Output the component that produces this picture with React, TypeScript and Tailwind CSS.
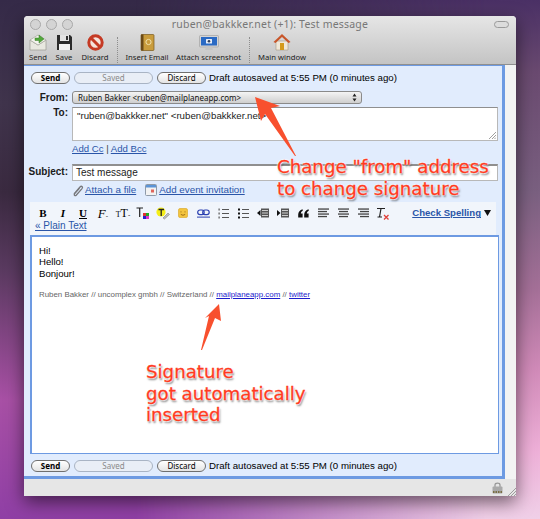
import React from "react";

const sans = "font-['Liberation_Sans',Arial,sans-serif]";
const lucida = "font-['Noto_Sans',sans-serif]";
const linkCls = "text-[#2a55a8] underline";

const Pill: React.FC<{ label: string; width: string; disabled?: boolean; bold?: boolean }> = ({ label, width, disabled, bold }) => (
  <div
    className={`${width} h-[12px] rounded-full border flex items-center justify-center text-[8px] leading-none ${lucida} ${
      disabled
        ? "border-[#a9b4c4] bg-[#e9eef6] text-[#8a8a8a]"
        : "border-[#6f6f6f] bg-gradient-to-b from-white to-[#e4e4e4] text-black"
    } ${bold ? "font-bold" : ""}`}
  >
    {label}
  </div>
);

const ActionRow = () => (
  <div className="flex items-center h-[13px] pl-[7px]">
    <Pill label="Send" width="w-[39px]" bold />
    <div className="w-[4px]" />
    <Pill label="Saved" width="w-[79px]" disabled />
    <div className="w-[4px]" />
    <Pill label="Discard" width="w-[49px]" />
    <span className={`ml-[3px] text-[9.7px] leading-none text-black whitespace-nowrap ${sans}`}>
      Draft autosaved at 5:55 PM (0 minutes ago)
    </span>
  </div>
);

const ToolItem: React.FC<{ label: string; width: string; children: React.ReactNode }> = ({ label, width, children }) => (
  <div className={`${width} flex flex-col items-center shrink-0`}>
    <div className="h-[17px] flex items-end">{children}</div>
    <span className={`mt-[2px] text-[7.7px] leading-[9px] text-[#1c1c1c] whitespace-nowrap ${lucida}`}>{label}</span>
  </div>
);

const SendIcon = () => (
  <svg width="18" height="17" viewBox="0 0 18 17">
    <path d="M1 6 L9 11 L17 6 V16 H1 Z" fill="#e8e8e0" stroke="#9a9a90" strokeWidth=".7" />
    <path d="M1 6 L9 1 L17 6 L9 11 Z" fill="#f4f4ee" stroke="#a5a59c" strokeWidth=".7" />
    <path d="M6 4 H10 V1 L15 5 L10 9 V6.5 H6 Z" fill="#52a83c" stroke="#3c7f2b" strokeWidth=".5" />
  </svg>
);
const SaveIcon = () => (
  <svg width="17" height="17" viewBox="0 0 17 17">
    <path d="M1 1 H14 L16 3 V16 H1 Z" fill="#2b2b2b" />
    <rect x="4" y="1" width="9" height="6" fill="#e3e3e3" />
    <rect x="10" y="2" width="2" height="4" fill="#333" />
    <rect x="3" y="10" width="11" height="6" fill="#f2f2f2" />
  </svg>
);
const DiscardIcon = () => (
  <svg width="17" height="17" viewBox="0 0 17 17">
    <circle cx="8.5" cy="8.5" r="6.7" fill="#f5e3dc" stroke="#c53a24" strokeWidth="3" />
    <path d="M4 4 L13 13" stroke="#c53a24" strokeWidth="3" />
  </svg>
);
const BookIcon = () => (
  <svg width="15" height="17" viewBox="0 0 15 17">
    <rect x="1" y="0.5" width="13" height="16" rx="1" fill="#c99c3c" stroke="#7a5a1c" strokeWidth=".7" />
    <rect x="1" y="0.5" width="2.5" height="16" fill="#6b4a18" />
    <circle cx="8.5" cy="8" r="2.6" fill="none" stroke="#f3e1aa" strokeWidth="1" />
  </svg>
);
const ScreenIcon = () => (
  <svg width="20" height="16" viewBox="0 0 20 16">
    <rect x="0.5" y="0.5" width="19" height="11.5" rx="1" fill="#d5d5d5" stroke="#9a9a9a" strokeWidth=".6" />
    <rect x="2" y="2" width="16" height="8.5" fill="#2a6ac4" />
    <rect x="7" y="4" width="6" height="4.5" rx=".5" fill="#e8eef8" />
    <circle cx="10" cy="6.2" r="1.3" fill="#30405c" />
    <path d="M7 12 H13 L14 15 H6 Z" fill="#c4c4c4" />
  </svg>
);
const HomeIcon = () => (
  <svg width="18" height="18" viewBox="0 0 18 18">
    <path d="M3 8 H15 V17 H3 Z" fill="#f0e8d8" stroke="#9a8a70" strokeWidth=".5" />
    <path d="M0.5 9 L9 1 L17.5 9 L15.5 10 L9 4 L2.5 10 Z" fill="#c8562a" />
    <rect x="7" y="10" width="4" height="7" fill="#d49a1c" />
  </svg>
);
const Separator = () => (
  <div className="w-0 h-[28px] border-l border-dotted border-[#8d8d8d] shrink-0" />
);

const FormRow: React.FC<{ label: string; className?: string; labelClass?: string; children: React.ReactNode }> = ({ label, className, labelClass, children }) => (
  <div className={`flex items-start ${className ?? ""}`}>
    <span className={`w-[44px] mr-[4px] text-right text-[10px] leading-none font-bold text-[#1a1a1a] shrink-0 ${sans} ${labelClass ?? ""}`}>{label}</span>
    {children}
  </div>
);

const ClipIcon = () => (
  <svg width="12" height="13" viewBox="0 0 12 13">
    <path d="M2 10 L8 3 C9.5 1.4 11.3 3 10 4.6 L4.2 11.2 C3.2 12.2 1.6 11.2 2.5 9.8 L7.6 4" fill="none" stroke="#77787c" strokeWidth="1.3" />
  </svg>
);
const CalIcon = () => (
  <svg width="12" height="12" viewBox="0 0 12 12">
    <rect x=".5" y=".5" width="11" height="11" rx="1" fill="#f2f2f2" stroke="#8f9aa8" />
    <rect x="1" y="1" width="10" height="2.5" fill="#5c94d6" />
    <rect x="6" y="5.5" width="3" height="3" fill="#e0655c" />
  </svg>
);

const serifGlyph = "font-['Liberation_Serif',serif] text-black leading-none";
const Cell: React.FC<{ children: React.ReactNode }> = ({ children }) => (
  <div className="w-[20px] h-[14px] flex items-center justify-center shrink-0">{children}</div>
);
const Lines: React.FC<{ kind?: "left" | "center" | "right" }> = ({ kind = "left" }) => (
  <svg width="11" height="10" viewBox="0 0 11 10">
    {[1, 3.5, 6, 8.5].map((y, i) => (
      <rect
        key={y}
        x={kind === "left" ? 0 : kind === "right" ? (i % 2 ? 2 : 0) : i % 2 ? 1 : 0}
        y={y - 0.6}
        width={i % 2 ? 9 : 11}
        height="1.3"
        fill="#444"
      />
    ))}
  </svg>
);
const ListIcon: React.FC<{ dots?: boolean }> = ({ dots }) => (
  <svg width="11" height="11" viewBox="0 0 11 11">
    {[1.5, 5.5, 9.5].map((y) => (
      <g key={y}>
        {dots ? <rect x="0" y={y - 1} width="2" height="2" fill="#111" /> : <rect x="0.5" y={y - 1} width="1.2" height="2" fill="#555" />}
        <rect x="4" y={y - 0.5} width="7" height="1" fill="#555" />
      </g>
    ))}
  </svg>
);
const IndentIcon: React.FC<{ out?: boolean }> = ({ out }) => (
  <svg width="12" height="10" viewBox="0 0 12 10">
    <rect x="4" y="0.5" width="8" height="9" fill="#555" />
    <path d="M5 2.5 H11 M5 5 H11 M5 7.5 H11" stroke="#eee" strokeWidth=".8" />
    <path d={out ? "M3.5 2 L0 5 L3.5 8 Z" : "M0 2 L3.5 5 L0 8 Z"} fill="#111" />
  </svg>
);

const EditorToolbar = () => (
  <div className="mx-[6px] h-[33px] bg-[#f1f5fb] pl-[3px] pr-[5px] pt-[4px] flex flex-col">
    <div className="flex items-center h-[14px]">
      <Cell><span className={`font-bold text-[11px] ${serifGlyph}`}>B</span></Cell>
      <Cell><span className={`italic font-bold text-[11px] ${serifGlyph}`}>I</span></Cell>
      <Cell><span className={`underline font-bold text-[11px] ${serifGlyph}`}>U</span></Cell>
      <Cell><span className={`italic text-[13px] ${serifGlyph}`}>F<span className="text-[7px] not-italic">-</span></span></Cell>
      <Cell><span className={`text-[12px] ${serifGlyph}`}><span className="text-[8px]">T</span>T<span className="text-[7px]">-</span></span></Cell>
      <Cell>
        <svg width="14" height="12" viewBox="0 0 14 12">
          <path d="M0.5 1 H7 M3.7 1 V10" stroke="#222" strokeWidth="1.2" fill="none" />
          <rect x="7" y="6" width="3" height="3" fill="#d33" /><rect x="10" y="6" width="3" height="3" fill="#2a2" />
          <rect x="7" y="9" width="3" height="3" fill="#22c" /><rect x="10" y="9" width="3" height="3" fill="#d3c" />
        </svg>
      </Cell>
      <Cell>
        <svg width="14" height="13" viewBox="0 0 14 13">
          <circle cx="5" cy="5" r="4.6" fill="#f5ee18" />
          <path d="M2.5 2.5 H8 M5.2 2.5 V9" stroke="#222" strokeWidth="1.3" fill="none" />
          <path d="M7 11 L12 6 L13.5 7.5 L8.5 12 Z" fill="#bdbdbd" stroke="#777" strokeWidth=".5" />
        </svg>
      </Cell>
      <Cell>
        <svg width="10" height="10" viewBox="0 0 10 10">
          <rect x=".5" y=".5" width="9" height="9" rx="1.5" fill="#f4c53e" stroke="#d9a420" strokeWidth=".6" />
          <path d="M3 3.4 V4.4 M7 3.4 V4.4 M2.8 6.4 Q5 8.2 7.2 6.4" stroke="#8a5a10" strokeWidth=".8" fill="none" />
        </svg>
      </Cell>
      <Cell>
        <svg width="13" height="9" viewBox="0 0 13 9">
          <rect x=".7" y="1" width="6.5" height="4.6" rx="2.3" fill="none" stroke="#2a3fb0" strokeWidth="1.2" />
          <rect x="5.7" y="1" width="6.5" height="4.6" rx="2.3" fill="none" stroke="#2a3fb0" strokeWidth="1.2" />
          <rect x="0" y="7.6" width="13" height="1" fill="#2a3fb0" />
        </svg>
      </Cell>
      <Cell><ListIcon /></Cell>
      <Cell><ListIcon dots /></Cell>
      <Cell><IndentIcon out /></Cell>
      <Cell><IndentIcon /></Cell>
      <Cell>
        <svg width="11" height="9" viewBox="0 0 11 9">
          <path d="M4.6 0.3 C2 1 0.2 3 0.2 5.6 V8.6 H4.6 V4.4 H2.8 C3 3 3.7 2.2 4.8 1.7 Z" fill="#111" />
          <path d="M10.6 0.3 C8 1 6.2 3 6.2 5.6 V8.6 H10.6 V4.4 H8.8 C9 3 9.7 2.2 10.8 1.7 Z" fill="#111" />
        </svg>
      </Cell>
      <Cell><Lines /></Cell>
      <Cell><Lines kind="center" /></Cell>
      <Cell><Lines kind="right" /></Cell>
      <Cell>
        <svg width="14" height="13" viewBox="0 0 14 13">
          <path d="M1 1.5 H9 M5 1.5 L3.5 10 M1.5 10 H6" stroke="#222" strokeWidth="1.2" fill="none" />
          <path d="M8 8 L12.5 12.5 M12.5 8 L8 12.5" stroke="#e0403a" strokeWidth="1.3" />
        </svg>
      </Cell>
      <span className={`ml-auto text-[9.6px] leading-none font-bold whitespace-nowrap ${linkCls} ${sans}`}>Check Spelling</span>
      <svg width="7" height="6" viewBox="0 0 7 6" className="ml-[3px] shrink-0">
        <path d="M0 0 H7 L3.5 6 Z" fill="#111" />
      </svg>
    </div>
    <div className={`pl-[2px] text-[10px] leading-[11px] whitespace-nowrap ${sans}`}>
      <span className={linkCls}>« Plain Text</span>
    </div>
  </div>
);

const Note: React.FC<{ className: string; children: React.ReactNode }> = ({ className, children }) => (
  <div
    className={`absolute whitespace-pre text-[18.2px] leading-[21.7px] text-[#ff3b1f] font-['DejaVu_Sans',sans-serif] [-webkit-text-stroke:0.3px_#ff3b1f] [text-shadow:0_0_2px_#fff,0_0_2px_#fff,0_0_2px_#fff,1px_2px_2px_rgba(0,0,0,0.55)] ${className}`}
  >
    {children}
  </div>
);

export default function App() {
  return (
    <div className="relative w-[540px] h-[519px] overflow-hidden bg-[linear-gradient(180deg,#352a48_0%,#40344c_20%,#3a2a40_37%,#5a3a60_52%,#a850a5_77%,#8f3fa5_100%)]">
      {/* desktop wallpaper, lighter and pinker towards the right */}
      <div className="absolute inset-0 bg-[linear-gradient(180deg,#4a3065_0%,#6a4a70_14%,#7a6080_37%,#a57098_56%,#d08ab8_71%,#eeb0d8_87%,#f0d0e8_100%)] [mask-image:linear-gradient(to_right,transparent_25%,black_90%)]" />
      <div className="relative pt-[16px] pl-[24px]">
        {/* window */}
        <div className="w-[492px] h-[480px] rounded-t-[4px] flex flex-col overflow-hidden shadow-[0_6px_18px_rgba(0,0,0,0.55)] bg-[#f3f3f3]">
          <div className="h-[49px] shrink-0 bg-gradient-to-b from-[#e6e6e6] to-[#c4c4c4] border-b border-[#8f8f8f] relative">
            <div className="flex gap-[5px] pl-[6px] pt-[3px]">
              <div className="w-[11px] h-[11px] rounded-full bg-[#d4d4d4] border border-[#a8a8a8]" />
              <div className="w-[11px] h-[11px] rounded-full bg-[#d4d4d4] border border-[#a8a8a8]" />
              <div className="w-[11px] h-[11px] rounded-full bg-[#d4d4d4] border border-[#a8a8a8]" />
            </div>
            <div className={`absolute left-0 right-0 top-[1px] text-center text-[10.5px] leading-[14px] text-[#777] tracking-[0.2px] ${lucida}`}>
              ruben@bakkker.net (+1): Test message
            </div>
            <div className="absolute right-[7px] top-[5px] w-[15px] h-[7px] rounded-full border border-[#9a9a9a] bg-[#dcdcdc]" />
            <div className="flex items-start pl-[3px] mt-[4px]">
              <ToolItem label="Send" width="w-[22px]"><SendIcon /></ToolItem>
              <div className="w-[4px]" />
              <ToolItem label="Save" width="w-[22px]"><SaveIcon /></ToolItem>
              <div className="w-[5px]" />
              <ToolItem label="Discard" width="w-[30px]"><DiscardIcon /></ToolItem>
              <div className="w-[7px]" />
              <div className="pt-[3px]"><Separator /></div>
              <div className="w-[4px]" />
              <ToolItem label="Insert Email" width="w-[50px]"><BookIcon /></ToolItem>
              <div className="w-[1px]" />
              <ToolItem label="Attach screenshot" width="w-[71px]"><ScreenIcon /></ToolItem>
              <div className="w-[5px]" />
              <div className="pt-[3px]"><Separator /></div>
              <div className="w-[7px]" />
              <ToolItem label="Main window" width="w-[50px]"><HomeIcon /></ToolItem>
            </div>
          </div>

          {/* compose panel */}
          <div className="h-[414px] shrink-0 mr-[11px] bg-[#e1ecfd] border-r-[3px] border-b-[3px] border-t border-[#6d9ae2] border-t-[#6d9ae2] pt-[5px]">
            <ActionRow />

            <FormRow label="From:" className="mt-[7px]" labelClass="pt-[2px]">
              <div className={`w-[290px] h-[13px] rounded-[3px] border border-[#8a8a8a] bg-gradient-to-b from-[#f4f4f4] to-[#cfcfcf] flex items-center pl-[5px] pr-[4px] text-[8px] leading-none text-[#111] ${lucida}`}>
                <span className="whitespace-nowrap">Ruben Bakker &lt;ruben@mailplaneapp.com&gt;</span>
                <svg width="5" height="9" viewBox="0 0 5 9" className="ml-auto shrink-0">
                  <path d="M2.5 0.5 L4.5 3.5 H0.5 Z M2.5 8.5 L4.5 5.5 H0.5 Z" fill="#222" />
                </svg>
              </div>
            </FormRow>

            <FormRow label="To:" className="mt-[3px]" labelClass="pt-[1px]">
              <div className={`relative w-[426px] h-[34px] bg-white border border-[#b8b8b8] border-t-[#8f8f8f] pl-[4px] pt-[1px] text-[9.7px] leading-[13px] text-[#222] ${sans}`}>
                "ruben@bakkker.net" &lt;ruben@bakkker.net&gt;
                <svg width="7" height="7" viewBox="0 0 7 7" className="absolute right-[1px] bottom-[1px]">
                  <path d="M0 7 L7 0 M3 7 L7 3 M5.5 7 L7 5.5" stroke="#777" strokeWidth=".7" />
                </svg>
              </div>
            </FormRow>

            <div className={`mt-[1px] ml-[48px] text-[9.6px] leading-[13px] text-[#444] ${sans}`}>
              <span className={linkCls}>Add Cc</span> | <span className={linkCls}>Add Bcc</span>
            </div>

            <FormRow label="Subject:" className="mt-[9px]" labelClass="pt-[3px]">
              <div className={`w-[426px] h-[17px] bg-white border border-[#b8b8b8] border-t-[#8f8f8f] border-t-2 pl-[3px] text-[10px] leading-[13px] text-[#222] ${sans}`}>
                Test message
              </div>
            </FormRow>

            <div className={`mt-[2px] ml-[48px] h-[14px] flex items-center text-[9.8px] ${sans}`}>
              <ClipIcon />
              <span className={`ml-[1px] ${linkCls}`}>Attach a file</span>
              <span className="ml-[9px]"><CalIcon /></span>
              <span className={`ml-[2px] ${linkCls}`}>Add event invitation</span>
            </div>

            <div className="h-[5px]" />
            <EditorToolbar />

            <div className={`mx-[6px] mt-0 h-[219px] w-[469px] bg-white border-2 border-[#6d9ae2] border-b border-r pl-[7px] pt-[8px] ${sans}`}>
              <div className="text-[9.6px] leading-[11.3px] text-black">Hi!</div>
              <div className="text-[9.6px] leading-[11.3px] text-black">Hello!</div>
              <div className="text-[9.6px] leading-[11.3px] text-black">Bonjour!</div>
              <div className="mt-[11px] text-[7.9px] leading-[10px] text-[#666] whitespace-nowrap">
                Ruben Bakker // uncomplex gmbh // Switzerland // <span className="text-[#1c1ccc] underline">mailplaneapp.com</span> // <span className="text-[#1c1ccc] underline">twitter</span>
              </div>
            </div>

            <div className="mt-[5px]"><ActionRow /></div>
          </div>

          {/* status bar */}
          <div className="flex-1 relative bg-[#e6e6e6]">
            <svg width="11" height="12" viewBox="0 0 11 12" className="absolute right-[13px] top-[3px]">
              <path d="M3 5 V3 C3 .6 8 .6 8 3 V5" fill="none" stroke="#9a9a9a" strokeWidth="1.3" />
              <rect x=".5" y="4.5" width="10" height="7" rx="1" fill="#a9a9a9" />
              <path d="M1 10 H10" stroke="#6a5a20" strokeWidth="1.5" strokeDasharray="1.5 1" />
            </svg>
            <svg width="9" height="8" viewBox="0 0 9 8" className="absolute right-0 bottom-0">
              <path d="M1 8 L9 0 M4 8 L9 3 M7 8 L9 6" stroke="#9d9d9d" strokeWidth="1" />
            </svg>
          </div>
        </div>
      </div>

      {/* annotation arrows */}
      <svg width="540" height="519" viewBox="0 0 540 519" className="absolute left-0 top-0 pointer-events-none">
        <path d="M255 97 L280 106 L271 108 L296 156 L295 156 L265 114 L261 121 Z" fill="#f8502e" />
        <path d="M219 304 L221 321 L215 318 L202 350 L201 350 L209 316 L205 318 Z" fill="#f8502e" />
      </svg>
      <Note className="left-[277px] top-[156px]">{'Change "from" address\nto change signature'}</Note>
      <Note className="left-[146px] top-[361px]">{"Signature\ngot automatically\ninserted"}</Note>
    </div>
  );
}
